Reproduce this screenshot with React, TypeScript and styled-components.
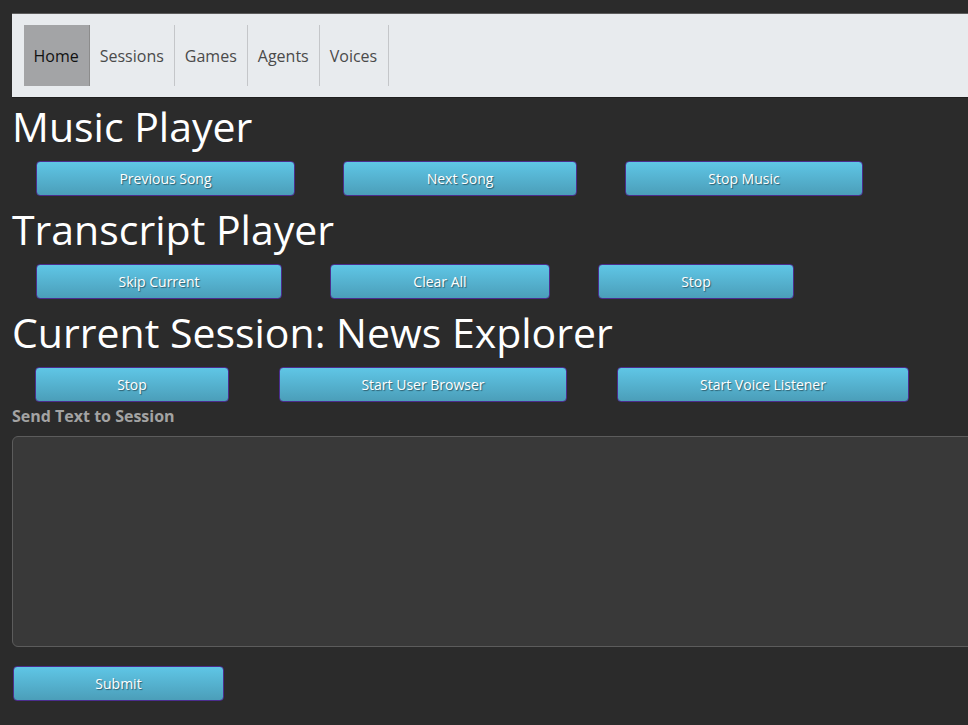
import React from 'react'
import styled, { createGlobalStyle } from 'styled-components'

const GlobalStyle = createGlobalStyle`
  html, body {
    margin: 0;
    padding: 0;
    background: #2b2b2b;
    overflow: hidden;
  }
  body {
    font-family: "Open Sans", "Noto Sans", "Liberation Sans", sans-serif;
  }
`

const Page = styled.div`
  padding: 13px 0 0 12px;
  width: 1000px;
`

const NavBar = styled.nav`
  display: flex;
  align-items: stretch;
  background: #e8ebee;
  border-top: 1px solid #5c5c5c;
  border-bottom: 1px solid #1f1f1f;
  padding: 11px 12px;
`

const NavItem = styled.a<{ active?: boolean }>`
  display: flex;
  align-items: center;
  height: 61px;
  padding: 0 10.5px 0 9.5px;
  font-size: 16px;
  color: ${({ active }) => (active ? '#111111' : '#4a4a4a')};
  background: ${({ active }) => (active ? '#a3a4a6' : 'transparent')};
  border-right: 1px solid ${({ active }) => (active ? '#8c8c8c' : '#c4c6c9')};
  box-sizing: border-box;
  text-decoration: none;
  cursor: pointer;
`

const Heading = styled.h1`
  margin: 1px 0 0;
  font-size: 41px;
  line-height: 54px;
  font-weight: 400;
  color: #ffffff;
  white-space: nowrap;
`

const ButtonRow = styled.div<{ last?: boolean }>`
  display: flex;
  padding: 8px 0 ${({ last }) => (last ? '0' : '5px')};
`

const Button = styled.button<{ w: number; ml?: number }>`
  box-sizing: border-box;
  width: ${({ w }) => w}px;
  height: 35px;
  margin: 0 24px;
  margin-left: ${({ ml }) => (ml === undefined ? 24 : ml)}px;
  border: 1px solid #4b2d8d;
  border-radius: 4px;
  background: linear-gradient(180deg, #5fc6e6 0%, #4b9eb9 100%);
  color: #ffffff;
  font-family: inherit;
  font-size: 14px;
  text-shadow: 1px 1px 1px rgba(0, 0, 0, 0.45);
  cursor: pointer;
  padding: 0;
`

const Label = styled.div`
  margin-top: 4px;
  font-size: 16px;
  line-height: 20px;
  font-weight: 700;
  color: #a3a3a3;
`

const TextArea = styled.textarea`
  display: block;
  box-sizing: border-box;
  width: 1000px;
  height: 211px;
  margin-top: 10px;
  background: #393939;
  border: 1px solid #5c5c5c;
  border-radius: 6px;
  color: #ffffff;
  resize: none;
  outline: none;
`

const SubmitButton = styled(Button)`
  margin: 19px 0 0 1px;
`

const navItems = ['Home', 'Sessions', 'Games', 'Agents', 'Voices']

export default function App() {
  return (
    <Page>
      <GlobalStyle />
      <NavBar>
        {navItems.map((item) => (
          <NavItem key={item} active={item === 'Home'}>
            {item}
          </NavItem>
        ))}
      </NavBar>

      <Heading>Music Player</Heading>
      <ButtonRow>
        <Button w={259}>Previous Song</Button>
        <Button w={234}>Next Song</Button>
        <Button w={238}>Stop Music</Button>
      </ButtonRow>

      <Heading>Transcript Player</Heading>
      <ButtonRow>
        <Button w={246}>Skip Current</Button>
        <Button w={220}>Clear All</Button>
        <Button w={196}>Stop</Button>
      </ButtonRow>

      <Heading>Current Session: News Explorer</Heading>
      <ButtonRow last>
        <Button w={194} ml={23}>Stop</Button>
        <Button w={288} ml={26}>Start User Browser</Button>
        <Button w={292} ml={26}>Start Voice Listener</Button>
      </ButtonRow>

      <Label>Send Text to Session</Label>
      <TextArea />
      <SubmitButton w={211}>Submit</SubmitButton>
    </Page>
  )
}
